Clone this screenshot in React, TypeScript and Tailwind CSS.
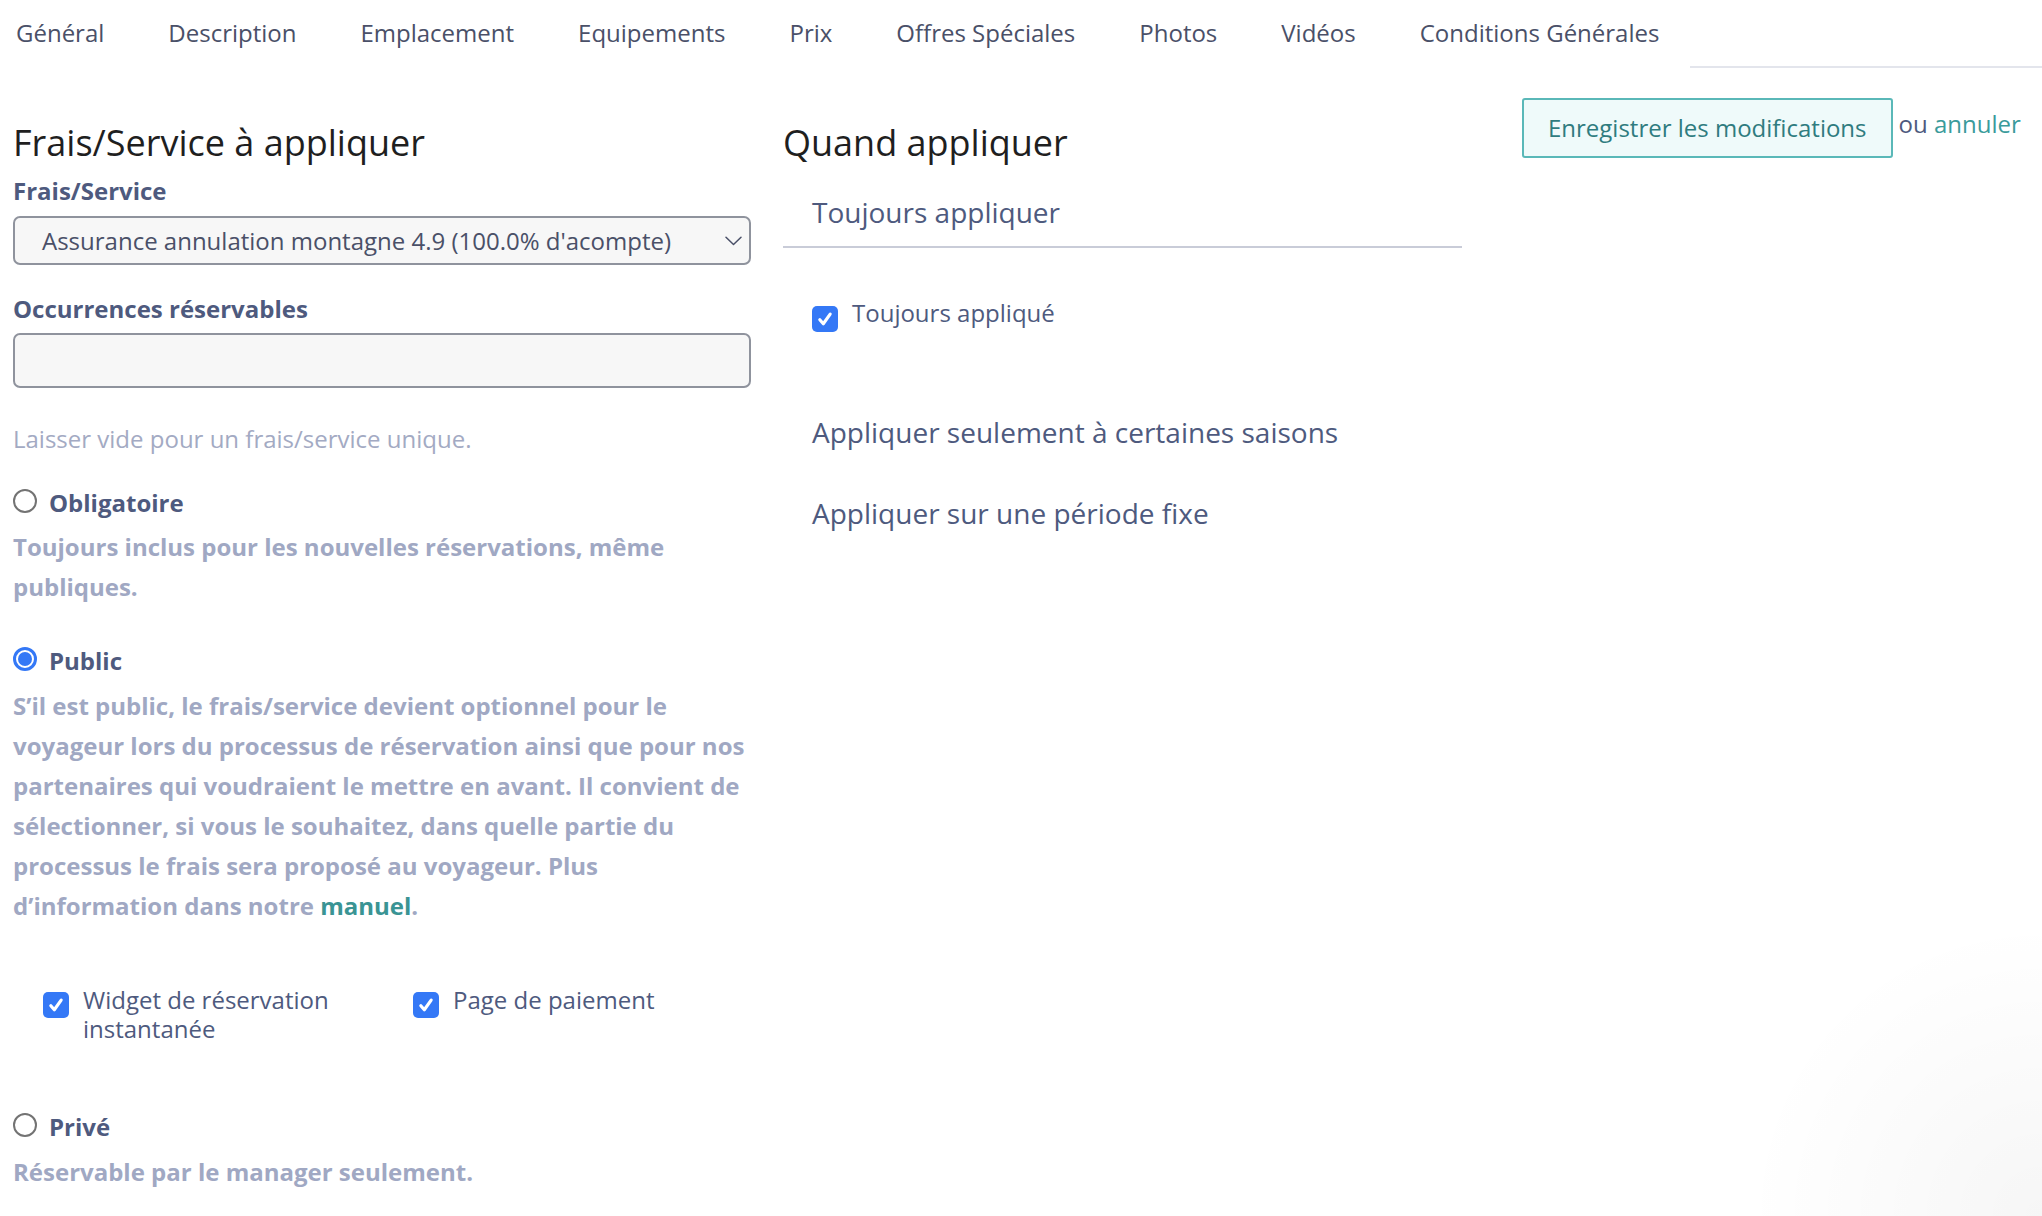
import React from "react";

const tabs = [
  "Général",
  "Description",
  "Emplacement",
  "Equipements",
  "Prix",
  "Offres Spéciales",
  "Photos",
  "Vidéos",
  "Conditions Générales",
];

function Radio({ checked }: { checked?: boolean }) {
  return checked ? (
    <span className="flex h-[24px] w-[24px] shrink-0 items-center justify-center rounded-full border-[3px] border-[#3478f6] bg-white">
      <span className="block h-[14px] w-[14px] rounded-full bg-[#3478f6]" />
    </span>
  ) : (
    <span className="block h-[24px] w-[24px] shrink-0 rounded-full border-[2px] border-[#737373] bg-white" />
  );
}

function Check() {
  return (
    <span className="flex h-[26px] w-[26px] shrink-0 items-center justify-center rounded-[5px] bg-[#3478f6]">
      <svg width="18" height="18" viewBox="0 0 16 16" fill="none">
        <path d="M3.4 8.6 L6.5 12.2 L12.6 3.6" stroke="white" strokeWidth="2.8" strokeLinecap="round" strokeLinejoin="round" />
      </svg>
    </span>
  );
}

export default function App() {
  return (
    <div className="relative min-h-screen overflow-hidden bg-white font-['Open_Sans',sans-serif]">
      {/* Tabs */}
      <nav className="flex h-[68px] items-stretch pl-[16px]">
        <div className="flex gap-[64px]">
          {tabs.map((t) => (
            <div key={t} className="flex h-[64px] items-center text-[24px] leading-[33px] text-[#4a5068]">
              {t}
            </div>
          ))}
        </div>
        <div className="ml-[31px] h-[68px] flex-1 border-b-[2px] border-[#e3e5ec]" />
      </nav>

      <div className="flex items-start pl-[13px]">
        {/* Left column */}
        <div className="flex w-[738px] shrink-0 flex-col pt-[51px]">
          <h1 className="text-[36px] leading-[48px] font-normal text-[#1f1f1f]">Frais/Service à appliquer</h1>
          <label className="mt-[8px] text-[24px] leading-[32px] font-bold text-[#4e5a7e]">Frais/Service</label>
          <div className="mt-[9px] flex h-[49px] items-center justify-between rounded-[7px] border-[2px] border-[#8f939d] bg-[#f7f7f7] pl-[27px] pr-[7px]">
            <span className="text-[24px] leading-[32px] text-[#4a5068]">
              Assurance annulation montagne 4.9 (100.0% d'acompte)
            </span>
            <svg width="17" height="10" viewBox="0 0 17 10" fill="none">
              <path d="M1 1.2 L8.5 8.5 L16 1.2" stroke="#4a5068" strokeWidth="1.5" strokeLinecap="round" strokeLinejoin="round" />
            </svg>
          </div>
          <label className="mt-[28px] text-[24px] leading-[32px] font-bold text-[#4e5a7e]">Occurrences réservables</label>
          <div className="mt-[8px] h-[55px] rounded-[7px] border-[2px] border-[#8f939d] bg-[#f7f7f7]" />
          <p className="mt-[31px] text-[24px] leading-[40px] text-[#a3aac3]">Laisser vide pour un frais/service unique.</p>

          <div className="mt-[24px] flex items-center gap-[12px]">
            <span className="-mt-[4px]"><Radio /></span>
            <span className="text-[24px] leading-[40px] font-bold text-[#4e5a7e]">Obligatoire</span>
          </div>
          <p className="mt-[4px] text-[24px] leading-[40px] font-bold text-[#a0a8c3]">
            Toujours inclus pour les nouvelles réservations, même
            <br />
            publiques.
          </p>

          <div className="mt-[34px] flex items-center gap-[12px]">
            <span className="-mt-[4px]"><Radio checked /></span>
            <span className="text-[24px] leading-[40px] font-bold text-[#4e5a7e]">Public</span>
          </div>
          <p className="mt-[5px] w-[780px] text-[24px] leading-[40px] font-bold text-[#a0a8c3]">
            S’il est public, le frais/service devient optionnel pour le
            <br />
            voyageur lors du processus de réservation ainsi que pour nos
            <br />
            partenaires qui voudraient le mettre en avant. Il convient de
            <br />
            sélectionner, si vous le souhaitez, dans quelle partie du
            <br />
            processus le frais sera proposé au voyageur. Plus
            <br />
            d’information dans notre <span className="text-[#3a9494]">manuel</span>.
          </p>

          <div className="mt-[59px] ml-[30px] flex items-start">
            <div className="flex w-[370px] items-start gap-[14px]">
              <span className="mt-[7px]"><Check /></span>
              <span className="text-[24px] leading-[29px] text-[#4e5a7e]">Widget de réservation instantanée</span>
            </div>
            <div className="flex items-start gap-[14px]">
              <span className="mt-[7px]"><Check /></span>
              <span className="text-[24px] leading-[29px] text-[#4e5a7e]">Page de paiement</span>
            </div>
          </div>

          <div className="mt-[64px] flex items-center gap-[12px]">
            <span className="-mt-[4px]"><Radio /></span>
            <span className="text-[24px] leading-[40px] font-bold text-[#4e5a7e]">Privé</span>
          </div>
          <p className="mt-[5px] text-[24px] leading-[40px] font-bold text-[#a0a8c3]">Réservable par le manager seulement.</p>
        </div>

        {/* Middle column */}
        <div className="ml-[32px] flex w-[679px] shrink-0 flex-col pt-[51px]">
          <h2 className="text-[36px] leading-[48px] font-normal text-[#1f1f1f]">Quand appliquer</h2>
          <div className="mt-[26px] border-b-[2px] border-[#c9ccd8] pb-[15px] pl-[29px] text-[28px] leading-[38px] text-[#4e5a7e]">
            Toujours appliquer
          </div>
          <div className="mt-[49px] flex items-start gap-[14px] pl-[29px]">
            <span className="mt-[9px]"><Check /></span>
            <span className="text-[24px] leading-[32px] text-[#4e5a7e]">Toujours appliqué</span>
          </div>
          <div className="mt-[81px] pl-[29px] text-[28px] leading-[38px] text-[#4e5a7e]">
            Appliquer seulement à certaines saisons
          </div>
          <div className="mt-[43px] pl-[29px] text-[28px] leading-[38px] text-[#4e5a7e]">
            Appliquer sur une période fixe
          </div>
        </div>

        {/* Right column */}
        <div className="ml-[60px] flex items-start pt-[30px]">
          <button className="h-[60px] rounded-[3px] border-[2px] border-[#5ab8b8] bg-[#effafa] px-[24px] text-[24px] leading-[32px] text-[#2f7c7f]">
            Enregistrer les modifications
          </button>
          <span className="ml-[6px] mt-[10px] text-[24px] leading-[32px] text-[#4e5a7e]">
            ou <span className="text-[#3a9b9b]">annuler</span>
          </span>
        </div>
      </div>

      <div className="pointer-events-none absolute bottom-0 right-0 h-[300px] w-[300px] bg-[radial-gradient(circle_at_100%_100%,rgba(0,0,0,0.035),transparent_70%)]" />
    </div>
  );
}
